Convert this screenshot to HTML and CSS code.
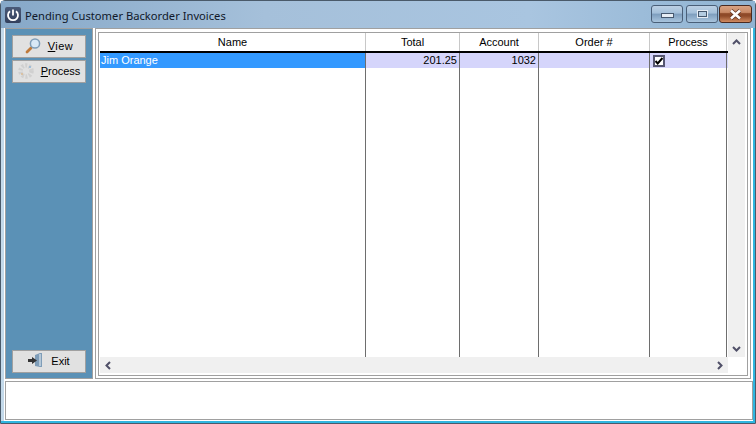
FILE: index.html
```html
<!DOCTYPE html>
<html lang="en">
<head>
    <meta charset="UTF-8">
    <title>Pending Customer Backorder Invoices</title>
    <link rel="stylesheet" href="styles.css">
</head>
<body>
    <div class="window">
        <div class="titlebar">
            <div class="app-icon">
                <svg width="16" height="16" viewBox="0 0 16 16">
                    <path d="M5 4.200a5 5 0 1 0 6 0" fill="none" stroke="#fff" stroke-width="1.800"/>
                    <path d="M8 2.500v6" stroke="#fff" stroke-width="1.800"/>
                </svg>
            </div>
            <div class="title">Pending Customer Backorder Invoices</div>
            <div class="caption-btns">
                <div class="cap-btn cap-min"><span class="min-glyph"></span></div>
                <div class="cap-btn cap-max"><span class="max-glyph"></span></div>
                <div class="cap-btn cap-close">
                    <svg width="15" height="11" viewBox="0 0 15 11">
                        <path d="M3 1.500l9 8M12 1.500l-9 8" stroke="#5a3020" stroke-width="4"/>
                        <path d="M3 1.500l9 8M12 1.500l-9 8" stroke="#fff" stroke-width="2.600"/>
                    </svg>
                </div>
            </div>
        </div>
        <div class="client">
            <div class="main">
                <div class="side">
                    <div class="btn">
                        <svg width="16" height="18" viewBox="0 0 16 18">
                            <path d="M6 11l-4 4" stroke="#c07a3a" stroke-width="2.800" stroke-linecap="round"/>
                            <circle cx="10" cy="6.500" r="4.600" fill="#d8e8f6" stroke="#7f9db8" stroke-width="1.500"/>
                        </svg>
                        <span class="btn-label label-view"><u>V</u>iew</span>
                    </div>
                    <div class="btn">
                        <svg width="16" height="18" viewBox="0 0 16 18">
                            <circle cx="8" cy="9" r="5.500" fill="none" stroke="#d0d0d0" stroke-width="4.500" stroke-dasharray="2 1.500"/>
                            <circle cx="12" cy="5" r="1" fill="#8fb6d8"/>
                            <circle cx="4" cy="12" r="1" fill="#d8b890"/>
                        </svg>
                        <span class="btn-label"><u>P</u>rocess</span>
                    </div>
                    <div class="side-fill"></div>
                    <div class="btn">
                        <svg width="16" height="18" viewBox="0 0 16 18">
                            <path d="M7 3l5-2h2v14h-2l-5-1z" fill="#7f9db8"/>
                            <path d="M11 2h2v12h-2z" fill="#b5c8d8"/>
                            <path d="M0 7h4V5l5 3.500L4 12v-2H0z" fill="#333"/>
                        </svg>
                        <span class="btn-label">Exit</span>
                    </div>
                </div>
                <div class="grid-frame">
                    <div class="grid">
                        <div class="table-wrap">
                            <div class="row head">
                                <div class="cell c-name">Name</div>
                                <div class="cell c-total">Total</div>
                                <div class="cell c-account">Account</div>
                                <div class="cell c-order">Order #</div>
                                <div class="cell c-process">Process</div>
                            </div>
                            <div class="row data">
                                <div class="cell c-name selected">Jim Orange</div>
                                <div class="cell c-total num">201.25</div>
                                <div class="cell c-account num">1032</div>
                                <div class="cell c-order"></div>
                                <div class="cell c-process"><span class="check">
                                    <svg width="8" height="8" viewBox="0 0 8 8"><path d="M.5 4l2.200 2.500L7.500 1" fill="none" stroke="#000" stroke-width="2"/></svg>
                                </span></div>
                            </div>
                            <div class="row empty">
                                <div class="cell c-name"></div>
                                <div class="cell c-total"></div>
                                <div class="cell c-account"></div>
                                <div class="cell c-order"></div>
                                <div class="cell c-process"></div>
                            </div>
                        </div>
                        <div class="vscroll">
                            <svg width="9" height="6" viewBox="0 0 9 6"><path d="M1 5l3.500-3.500L8 5" fill="none" stroke="#505068" stroke-width="2"/></svg>
                            <svg width="9" height="6" viewBox="0 0 9 6"><path d="M1 1l3.500 3.500L8 1" fill="none" stroke="#505068" stroke-width="2"/></svg>
                        </div>
                        <div class="hscroll">
                            <svg width="6" height="9" viewBox="0 0 6 9"><path d="M5 1L1.500 4.500 5 8" fill="none" stroke="#505068" stroke-width="2"/></svg>
                            <svg width="6" height="9" viewBox="0 0 6 9"><path d="M1 1l3.500 3.500L1 8" fill="none" stroke="#505068" stroke-width="2"/></svg>
                        </div>
                    </div>
                </div>
            </div>
            <div class="status"></div>
        </div>
    </div>
</body>
</html>
```

FILE: styles.css
```css
html, body {
    margin: 0;
    padding: 0;
}
body {
    width: 756px;
    height: 424px;
    overflow: hidden;
    font-family: "Liberation Sans", Arial, sans-serif;
    font-size: 11px;
    color: #000;
}
.window {
    height: 424px;
    box-sizing: border-box;
    display: flex;
    flex-direction: column;
    background: #c3d9ea;
    border: 1px solid #4a5a6a;
    border-radius: 5px 5px 0 0;
    box-shadow: inset -2px -2px 0 #2fb6e0;
}
.titlebar {
    height: 27px;
    flex-shrink: 0;
    display: flex;
    align-items: center;
    padding: 1px 0 0 4px;
    box-sizing: border-box;
    background: linear-gradient(to right, #86a8c8 0, #a5c0da 35%, #a9c5e0 70%, #8fb3d2 100%);
}
.app-icon {
    width: 16px;
    height: 16px;
    background: linear-gradient(to bottom, #4a5a78, #33405c);
    border-radius: 2px;
}
.title {
    margin-left: 4px;
    font-family: "Noto Sans", Arial, sans-serif;
    font-size: 11.2px;
    color: #10182a;
    flex: 1;
}
.caption-btns {
    display: flex;
    align-self: flex-start;
    margin-top: 3px;
    margin-right: 3px;
    gap: 3px;
}
.cap-btn {
    width: 32px;
    height: 18px;
    box-sizing: border-box;
    border: 1px solid #4a5f78;
    border-radius: 3px;
    display: flex;
    align-items: center;
    justify-content: center;
    background: linear-gradient(to bottom, #bcd0e4 0, #a3bfd9 45%, #7d9dbd 50%, #a9c4dd 100%);
}
.cap-close {
    width: 33px;
    margin-left: -2px;
    border-color: #4a2a20;
    background: linear-gradient(to bottom, #d9a283 0, #c98a66 40%, #8f4a28 48%, #8f4a28 62%, #d08a60 100%);
}
.min-glyph {
    width: 11px;
    height: 3px;
    margin-top: 3px;
    background: #e6edf5;
    border: 1px solid #46586e;
}
.max-glyph {
    width: 7px;
    height: 4px;
    border: 1px solid #46586e;
    background: #b5cde2;
    outline: 1px solid #e6edf5;
}
.client {
    flex: 1;
    margin: 0 2px 2px 3px;
    background: #fff;
    display: flex;
    flex-direction: column;
}
.main {
    height: 351px;
    flex-shrink: 0;
    display: flex;
    gap: 2px;
    padding: 0 1px;
    margin-right: 1px;
}
.side {
    width: 88px;
    box-sizing: border-box;
    background: #5b91b6;
    border: 1px solid #a0a0a0;
    padding: 6px 6px 5px 6px;
    display: flex;
    flex-direction: column;
    gap: 2px;
}
.side-fill {
    flex: 1;
}
.btn {
    height: 23px;
    box-sizing: border-box;
    padding-bottom: 2px;
    background: #e1e1e1;
    border: 1px solid #a0a0a0;
    display: flex;
    align-items: center;
    justify-content: center;
    gap: 7px;
}
.label-view {
    letter-spacing: .5px;
}
.grid-frame {
    flex: 1;
    border: 1px solid #a0a0a0;
    padding: 3px 2px 2px;
    background: #fff;
}
.grid {
    height: 100%;
    box-sizing: border-box;
    border: 1px solid #a0a0a0;
    display: grid;
    grid-template-columns: 628px 17px 1fr;
    grid-template-rows: 324px 16px 1fr;
    padding-left: 1px;
}
.table-wrap {
    display: flex;
    flex-direction: column;
    overflow: hidden;
}
.row {
    display: flex;
}
.cell {
    box-sizing: border-box;
    border-right: 1px solid #6e6e6e;
}
.c-name { width: 266px; }
.c-total { width: 94px; }
.c-account { width: 79px; }
.c-order { width: 111px; }
.c-process { width: 77px; }
.head {
    height: 20px;
    border-bottom: 2px solid #000;
    box-sizing: border-box;
}
.head .cell {
    text-align: center;
    line-height: 18px;
    border-right: 1px solid #c8c8c8;
}
.data {
    height: 15px;
    line-height: 15px;
    background: #d5d5fb;
}
.selected {
    background: #3399ff;
    color: #fff;
    padding-left: 1px;
}
.num {
    text-align: right;
    padding-right: 2px;
}
.check {
    display: block;
    width: 12px;
    height: 12px;
    margin: 2px 0 0 3px;
    box-sizing: border-box;
    border: 2px solid #565672;
    background: #fff;
}
.check svg {
    display: block;
}
.empty {
    flex: 1;
}
.vscroll {
    grid-column: 2;
    grid-row: 1;
    background: #f0f0f0;
    display: flex;
    flex-direction: column;
    justify-content: space-between;
    align-items: center;
    padding: 6px 0 5px;
}
.hscroll {
    grid-column: 1;
    grid-row: 2;
    background: #f0f0f0;
    display: flex;
    justify-content: space-between;
    align-items: center;
    padding: 0 5px;
}
.status {
    height: 37px;
    flex-shrink: 0;
    margin: 2px 0 0 1px;
    border: 1px solid #a0a0a0;
    background: #fff;
}
```
